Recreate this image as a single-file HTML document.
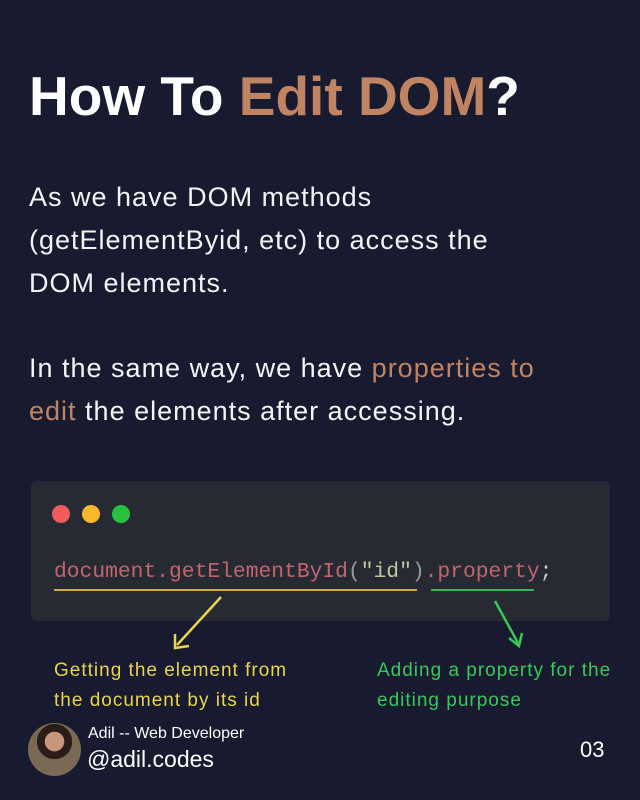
<!DOCTYPE html>
<html><head><meta charset="utf-8"><style>
*{margin:0;padding:0;box-sizing:border-box}
body{width:640px;height:800px;background:#181a30;position:relative;overflow:hidden;font-family:"Liberation Sans",sans-serif;color:#fff}
.a{position:absolute;white-space:nowrap}
h1{position:absolute;left:29px;top:61px;font-size:55px;font-weight:bold;line-height:70px}
.o{color:#c08463}
.p{position:absolute;left:29px;font-size:27px;letter-spacing:1px;line-height:43px;color:#f4f4f6;white-space:nowrap}
.card{position:absolute;left:31px;top:481px;width:579px;height:140px;background:#272a33;border-radius:6px}
.dot{position:absolute;top:505px;width:18px;height:18px;border-radius:50%}
.code{position:absolute;left:54px;top:560px;font-family:"Liberation Mono",monospace;font-size:21.3px;color:#c2656f}
.y{color:#e8d44d}.g{color:#38c95a}
.n{font-size:19px;letter-spacing:1px;line-height:30px;position:absolute;white-space:nowrap}
</style></head><body>
<h1>How To <span class="o">Edit DOM</span>?</h1>
<div class="p" style="top:176px">As we have DOM methods<br>(getElementByid, etc) to access the<br>DOM elements.</div>
<div class="p" style="top:347px">In the same way, we have <span class="o">properties to</span><br><span class="o">edit</span> the elements after accessing.</div>
<div class="card"></div>
<div class="dot" style="left:52px;background:#f25b5b"></div>
<div class="dot" style="left:82px;background:#f9b82b"></div>
<div class="dot" style="left:112px;background:#27c13f"></div>
<div class="code">document.getElementById<span style="color:#9a9aa0">(</span><span style="color:#bcc6a0">"id"</span><span style="color:#9a9aa0">)</span>.property<span style="color:#c9c9c9">;</span></div>
<div class="a" style="left:54px;top:589px;width:363px;height:2px;background:#c9ad3f"></div>
<div class="a" style="left:431px;top:589px;width:103px;height:2px;background:#36b555"></div>
<svg class="a" style="left:0;top:0" width="640" height="800">
<g stroke="#e8d44d" stroke-width="2.5" fill="none"><path d="M221 597 L177 645"/><path d="M175 634 L175 648 L189 646"/></g>
<g stroke="#38c95a" stroke-width="2.5" fill="none"><path d="M495 601 L518 643"/><path d="M509 638 L519 646 L522 633"/></g>
</svg>
<div class="n y" style="left:54px;top:656px">Getting the element from<br>the document by its id</div>
<div class="n g" style="left:377px;top:656px">Adding a property for the<br>editing purpose</div>
<div class="a" style="left:28px;top:723px;width:53px;height:53px;border-radius:50%;background:radial-gradient(circle at 50% 35%,#c9957a 0 22%,#2a1d18 23% 40%,#7a6a55 41%)"></div>
<div class="a" style="left:88px;top:725px;font-size:16px">Adil -- Web Developer</div>
<div class="a" style="left:87px;top:746px;font-size:23px">@adil.codes</div>
<div class="a" style="left:580px;top:737px;font-size:22px">03</div>
</body></html>
